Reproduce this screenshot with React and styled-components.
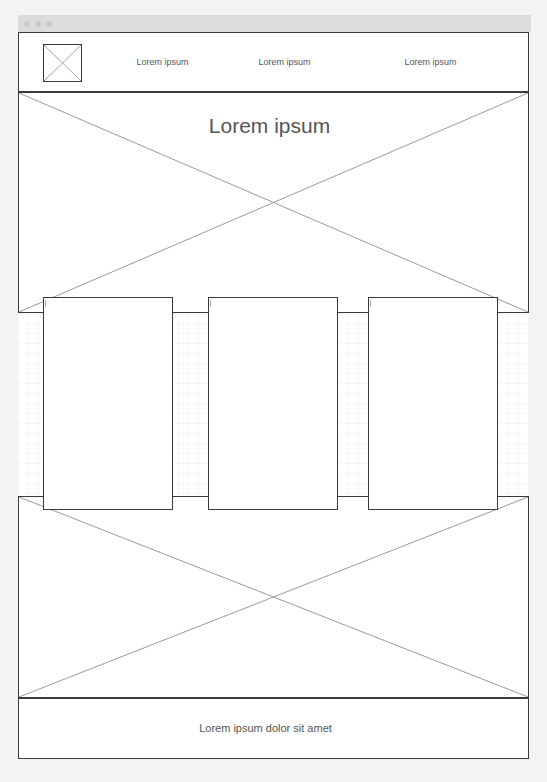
import React from 'react';
import styled, { createGlobalStyle } from 'styled-components';

const GlobalStyle = createGlobalStyle`
  html, body {
    margin: 0;
    padding: 0;
    background: #f3f3f3;
    font-family: "Liberation Sans", Arial, sans-serif;
  }
`;

const Page = styled.div`
  padding: 15px 0 0 18px;
  width: 547px;
  height: 782px;
  box-sizing: border-box;
`;

const Chrome = styled.div`
  width: 513px;
  height: 17px;
  background: #dcdcdc;
  display: flex;
  align-items: center;
  gap: 5px;
  padding-left: 6px;
  box-sizing: border-box;
`;

const Dot = styled.span`
  width: 6px;
  height: 6px;
  border-radius: 50%;
  background: #cbcbcb;
`;

const Frame = styled.div`
  width: 511px;
  display: flex;
  flex-direction: column;
`;

const Nav = styled.nav`
  height: 61px;
  box-sizing: border-box;
  border: 1px solid #3a3a3a;
  border-bottom-width: 2px;
  background: #fff;
  display: flex;
  align-items: center;
  padding-left: 24px;
  padding-bottom: 1px;
`;

const Logo = styled.div`
  position: relative;
  width: 39px;
  height: 38px;
  box-sizing: border-box;
  border: 1px solid #3a3a3a;
  margin-top: 2px;
  flex-shrink: 0;
`;

const NavLink = styled.a`
  font-size: 9px;
  color: #555;
  margin-left: ${({ $gap }) => $gap}px;
  width: 53px;
  text-align: center;
  white-space: nowrap;
  margin-top: 1px;
`;

const Placeholder = styled.section`
  position: relative;
  background: #fff;
  border: 1px solid #3a3a3a;
  border-top: none;
  box-sizing: border-box;
  height: ${({ $h }) => $h}px;
`;

const Cross = styled.svg`
  position: absolute;
  inset: 0;
  width: 100%;
  height: 100%;
  pointer-events: none;
`;

const HeroTitle = styled.h1`
  position: relative;
  margin: 0;
  padding: 21px 8px 0 0;
  text-align: center;
  font-size: 21px;
  font-weight: normal;
  color: #555;
  line-height: 24px;
`;

const CardRow = styled.div`
  height: 183px;
  display: flex;
  align-items: flex-start;
  padding-left: 25px;
  background-color: #fff;
  background-image:
    linear-gradient(to right, rgba(0, 0, 0, 0.03) 1px, transparent 1px),
    linear-gradient(to bottom, rgba(0, 0, 0, 0.03) 1px, transparent 1px);
  background-size: 10px 10px;
`;

const Card = styled.div`
  position: relative;
  z-index: 2;
  width: 130px;
  height: 213px;
  margin-top: -16px;
  margin-left: ${({ $gap }) => $gap}px;
  box-sizing: border-box;
  border: 1px solid #3a3a3a;
  background: #fff;

  &::before {
    content: '';
    position: absolute;
    left: 1px;
    top: 2px;
    width: 1px;
    height: 7px;
    background: #aaa;
  }
`;

const BottomImage = styled(Placeholder)`
  border-top: 1px solid #3a3a3a;
`;

const Footer = styled.footer`
  height: 61px;
  box-sizing: border-box;
  border: 1px solid #3a3a3a;
  background: #fff;
  display: flex;
  align-items: center;
  justify-content: center;
  font-size: 11px;
  color: #555;
  padding: 0 16px 2px 0;
`;

const XLines = ({ color = '#a5a5a5' }) => (
  <Cross viewBox="0 0 100 100" preserveAspectRatio="none">
    <line x1="0" y1="0" x2="100" y2="100" stroke={color} strokeWidth="1" vectorEffect="non-scaling-stroke" />
    <line x1="100" y1="0" x2="0" y2="100" stroke={color} strokeWidth="1" vectorEffect="non-scaling-stroke" />
  </Cross>
);

const App = () => {
  return (
    <>
      <GlobalStyle />
      <Page>
        <Chrome>
          <Dot />
          <Dot />
          <Dot />
        </Chrome>
        <Frame>
          <Nav>
            <Logo>
              <XLines />
            </Logo>
            <NavLink $gap={54}>Lorem ipsum</NavLink>
            <NavLink $gap={69}>Lorem ipsum</NavLink>
            <NavLink $gap={93}>Lorem ipsum</NavLink>
          </Nav>

          <Placeholder $h={220}>
            <XLines color="#9a9a9a" />
            <HeroTitle>Lorem ipsum</HeroTitle>
          </Placeholder>

          <CardRow>
            <Card $gap={0} />
            <Card $gap={35} />
            <Card $gap={30} />
          </CardRow>

          <BottomImage $h={202}>
            <XLines color="#9a9a9a" />
          </BottomImage>

          <Footer>Lorem ipsum dolor sit amet</Footer>
        </Frame>
      </Page>
    </>
  );
};

export default App;
